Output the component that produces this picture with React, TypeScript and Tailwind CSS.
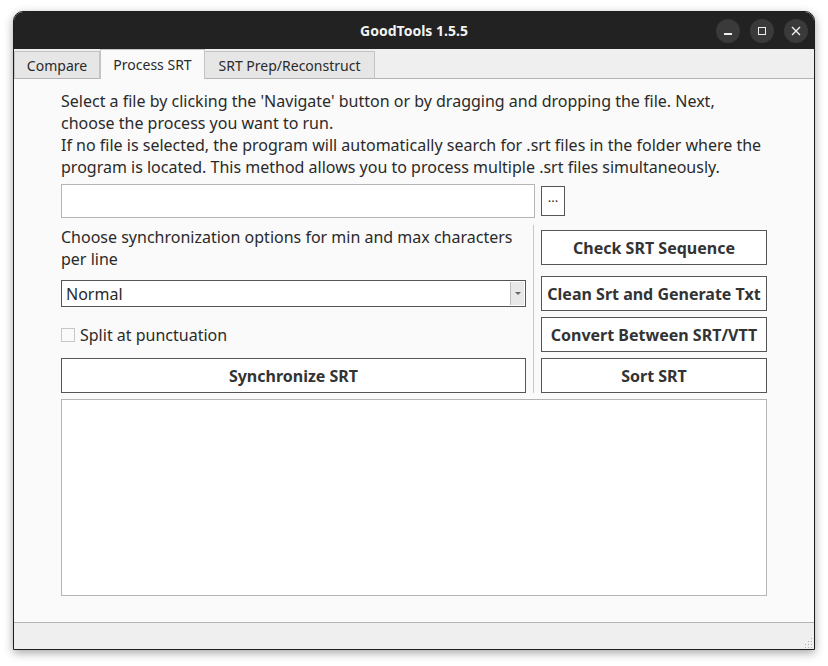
import React from "react";

const font = { fontFamily: '"Noto Sans", "DejaVu Sans", sans-serif' };

function Btn({ children, className = "" }: { children: React.ReactNode; className?: string }) {
  return (
    <div
      className={
        "flex items-center justify-center border border-[#555555] bg-white text-[16px] font-bold text-[#333333] " +
        className
      }
    >
      {children}
    </div>
  );
}

export default function App() {
  return (
    <div className="h-[666px] w-[828px] bg-white pl-[13px] pt-[11px]" style={font}>
      <div className="flex h-[639px] w-[802px] flex-col overflow-hidden rounded-t-[10px] border border-[#1e1e1e] bg-[#fafafa] shadow-[0_3px_10px_rgba(0,0,0,0.35)]">
        {/* Title bar */}
        <div className="relative flex h-[37px] shrink-0 items-center justify-center bg-[#222222]">
          <span className="text-[14px] font-bold text-[#f2f2f2]">GoodTools 1.5.5</span>
          <div className="absolute right-[6px] top-[7px] flex gap-[10px]">
            <div className="flex h-[24px] w-[24px] items-center justify-center rounded-full bg-[#3a3a3a]">
              <div className="mt-[6px] h-[1.5px] w-[8px] bg-[#eeeeee]" />
            </div>
            <div className="flex h-[24px] w-[24px] items-center justify-center rounded-full bg-[#3a3a3a]">
              <div className="h-[8px] w-[8px] border border-[#eeeeee]" />
            </div>
            <div className="flex h-[24px] w-[24px] items-center justify-center rounded-full bg-[#3a3a3a]">
              <svg width="10" height="10" viewBox="0 0 10 10">
                <path d="M1 1L9 9M9 1L1 9" stroke="#eeeeee" strokeWidth="1.4" />
              </svg>
            </div>
          </div>
        </div>

        {/* Tabs */}
        <div className="flex h-[30px] shrink-0 items-end border-b border-[#b4b4b4] bg-[#efefef] text-[14px] text-[#2a2a2a]">
          <div className="mb-[-1px] flex h-[28px] w-[86px] items-center justify-center border border-b-[#b4b4b4] border-[#c4c4c4] bg-[#e6e6e6]">
            Compare
          </div>
          <div className="mb-[-1px] flex h-[30px] w-[105px] items-center justify-center border border-b-0 border-[#c4c4c4] bg-[#fafafa] pb-[1px]">
            Process SRT
          </div>
          <div className="mb-[-1px] flex h-[28px] w-[170px] items-center justify-center border border-l-0 border-b-[#b4b4b4] border-[#c4c4c4] bg-[#e6e6e6]">
            SRT Prep/Reconstruct
          </div>
        </div>

        {/* Content */}
        <div className="flex flex-1 flex-col px-[47px] pt-[11px] text-[#2a2a2a]">
          <p className="text-[16px] leading-[22px]">
            Select a file by clicking the 'Navigate' button or by dragging and dropping the file. Next,
            <br />
            choose the process you want to run.
            <br />
            If no file is selected, the program will automatically search for .srt files in the folder where the
            <br />
            program is located. This method allows you to process multiple .srt files simultaneously.
          </p>

          <div className="mt-[6px] flex items-center gap-[6px]">
            <div className="h-[34px] w-[474px] border border-[#b4b4b4] bg-white" />
            <div className="flex h-[30px] w-[24px] items-center justify-center border border-[#555555] bg-white pb-[6px] text-[13px]">
              ...
            </div>
          </div>

          <div className="mt-[7px] flex">
            <div className="flex w-[465px] flex-col">
              <div className="mt-[1px] text-[16px] leading-[22px]">
                Choose synchronization options for min and max characters per line
              </div>
              <div className="mt-[10px] flex h-[27px] items-center border border-[#555555] bg-white pl-[4px]">
                <span className="flex-1 text-[16px]">Normal</span>
                <div className="mr-[1px] flex h-[23px] w-[14px] items-center justify-center border-l border-[#bdbdbd] bg-[#e8e8e8]">
                  <svg width="8" height="5" viewBox="0 0 8 5">
                    <path d="M1 1h6L4 4z" fill="#666" />
                  </svg>
                </div>
              </div>
              <div className="mt-[17px] flex items-center gap-[5px]">
                <div className="h-[14px] w-[14px] border border-[#c8c8c8] bg-[#fafafa]" />
                <span className="text-[16px] leading-[22px]">Split at punctuation</span>
              </div>
              <Btn className="mt-[12px] h-[35px]">Synchronize SRT</Btn>
            </div>
            <div className="ml-[7px] mr-[7px] w-px self-stretch bg-[#c8c8c8]" />
            <div className="flex w-[226px] flex-col pt-[5px]">
              <Btn className="h-[35px]">Check SRT Sequence</Btn>
              <Btn className="mt-[11px] h-[35px]">Clean Srt and Generate Txt</Btn>
              <Btn className="mt-[6px] h-[35px]">Convert Between SRT/VTT</Btn>
              <Btn className="mt-[6px] h-[35px]">Sort SRT</Btn>
            </div>
          </div>

          <div className="mt-[6px] h-[197px] w-[706px] border border-[#b4b4b4] bg-white" />
        </div>

        {/* Status bar */}
        <div className="relative h-[27px] shrink-0 border-t border-[#b4b4b4] bg-[#efefef]">
          <svg className="absolute bottom-[1px] right-[1px]" width="10" height="10" viewBox="0 0 10 10">
            {[
              [8, 0], [8, 3], [5, 3], [8, 6], [5, 6], [2, 6], [8, 9], [5, 9], [2, 9],
            ].map(([x, y], i) => (
              <rect key={i} x={x} y={y} width="1" height="1" fill="#b0b0b0" />
            ))}
          </svg>
        </div>
      </div>
    </div>
  );
}
